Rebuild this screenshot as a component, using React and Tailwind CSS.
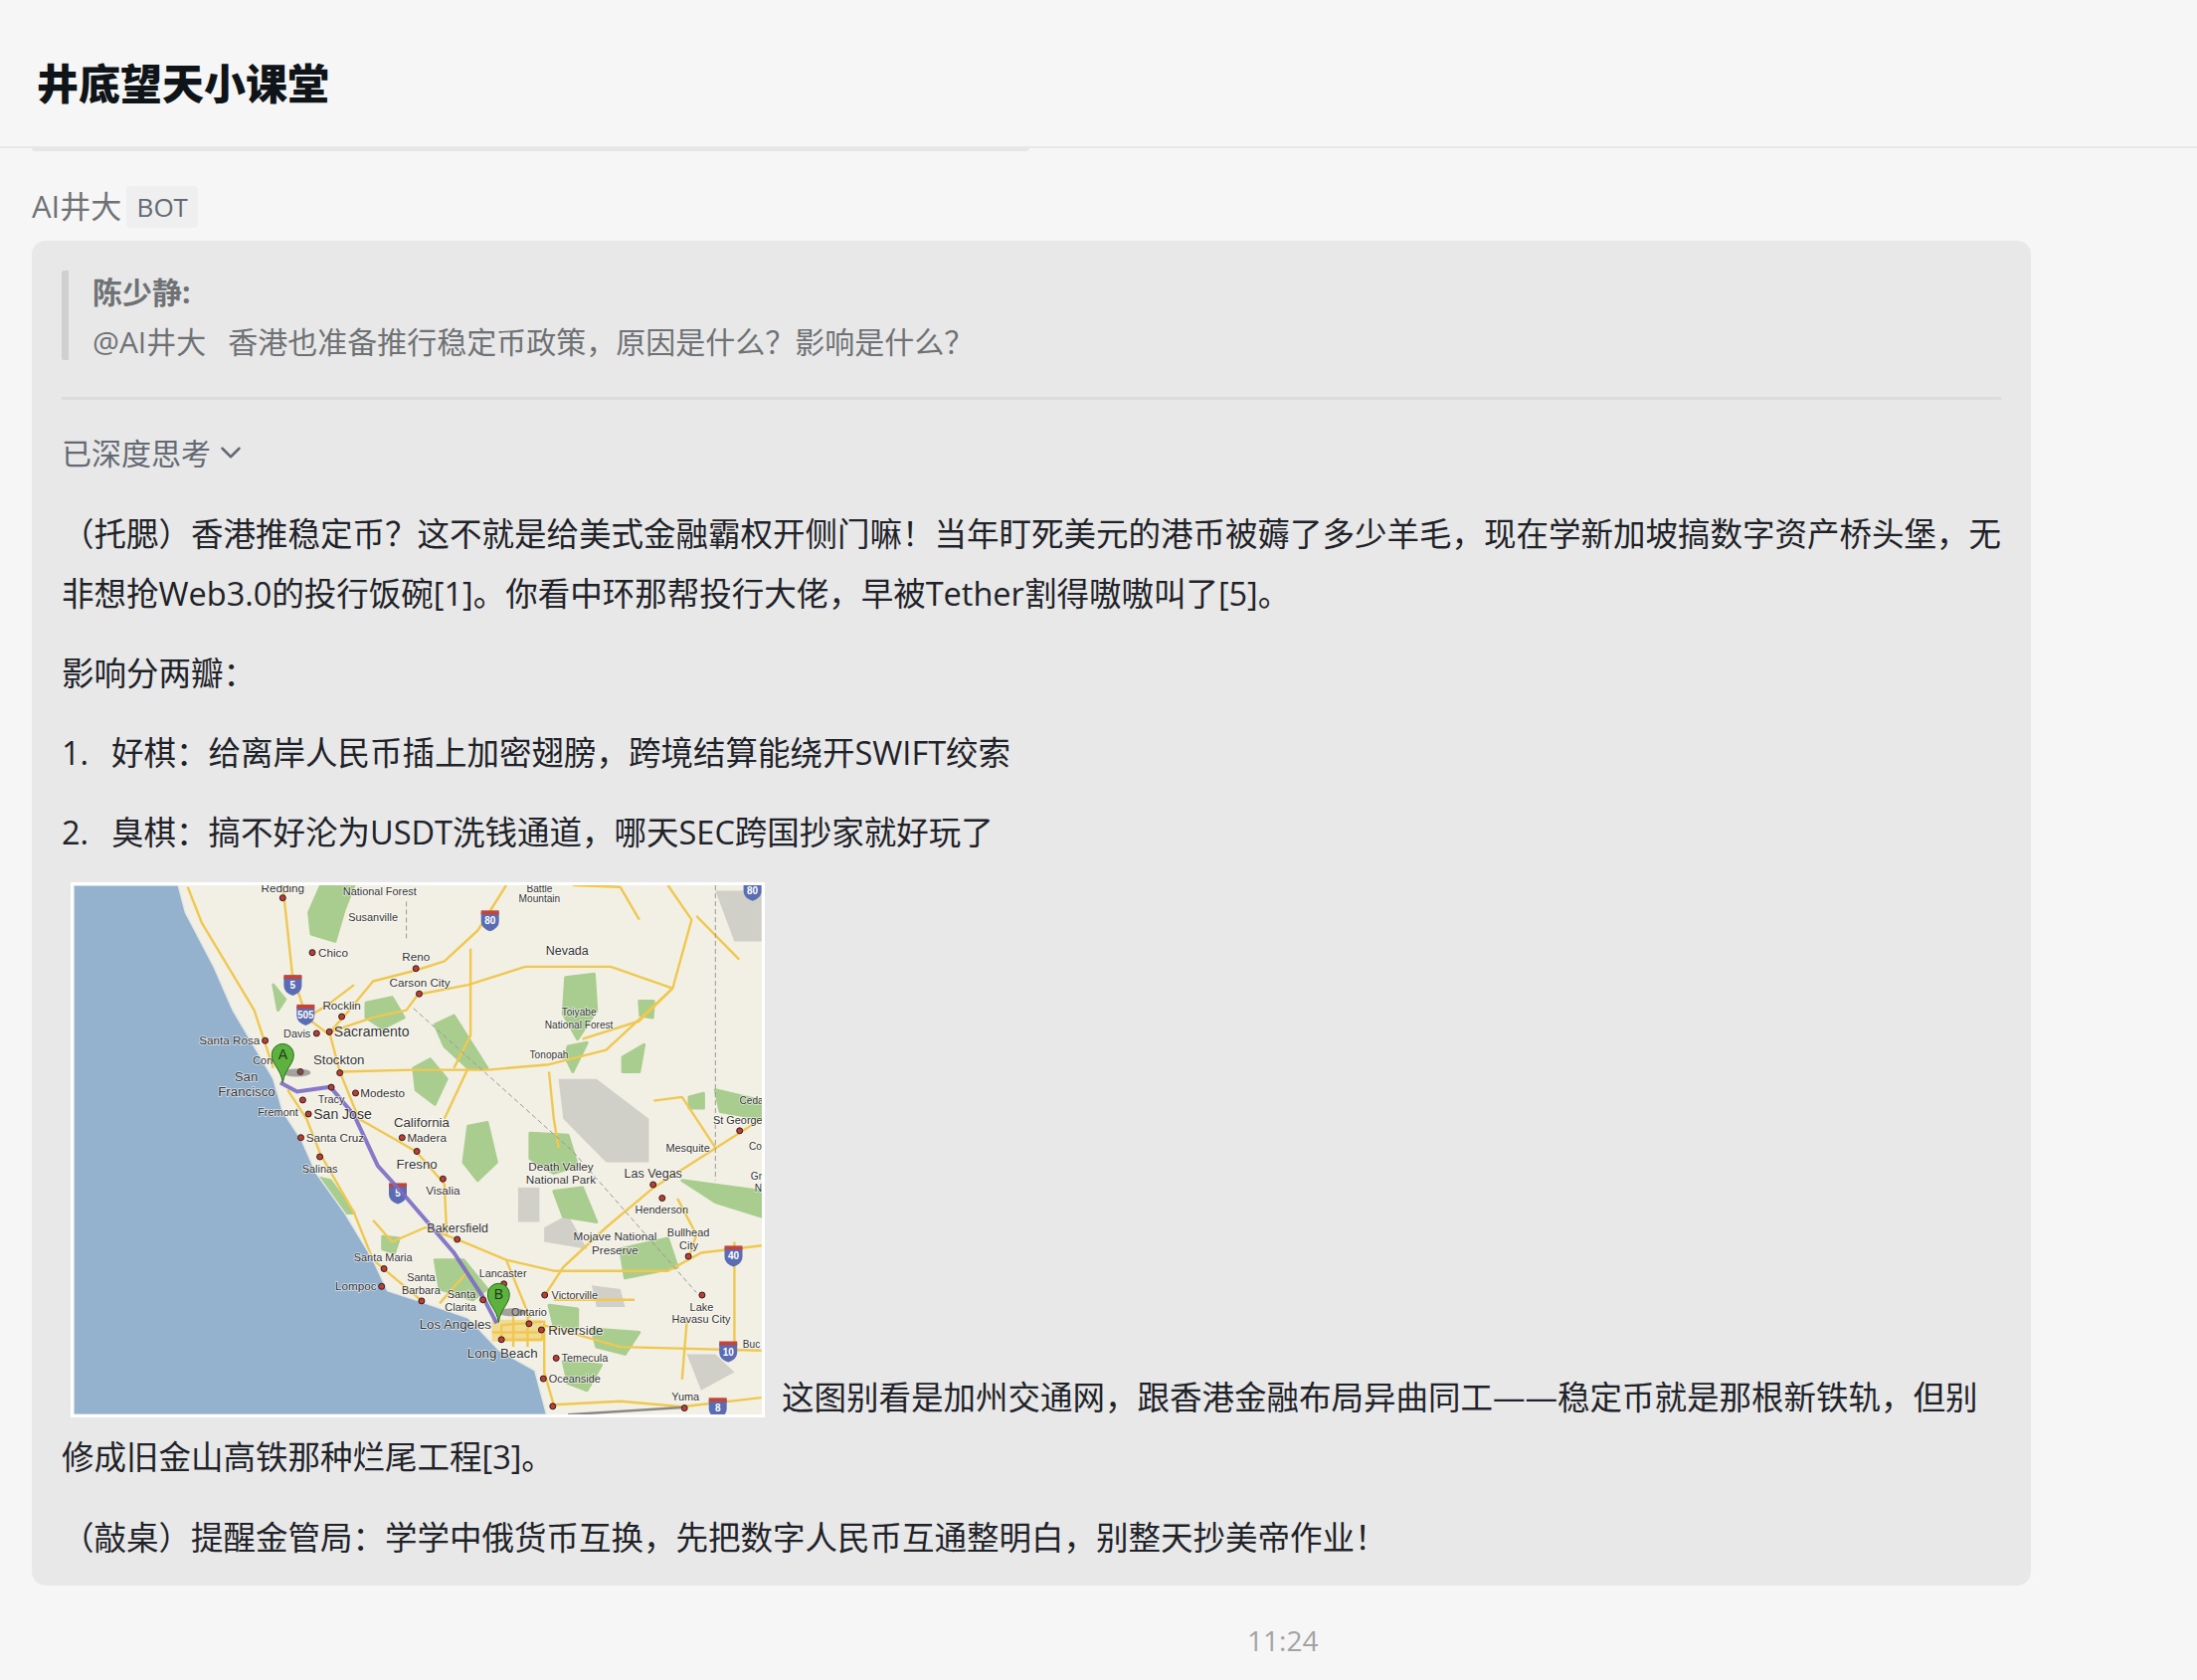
import React from "react";
import { ChevronDown } from "lucide-react";

const X = (x) => +((x - 50) * 0.478).toFixed(1);
const Y = (y) => +((y - 55) * 0.364).toFixed(1);
const pts = (a) => a.map(([x, y]) => `${X(x)},${Y(y)}`).join(" ");

const ocean = [[50,55],[270,55],[285,130],[345,280],[385,400],[430,500],[470,590],[490,680],[530,760],[560,850],[620,960],[680,1090],[710,1175],[780,1205],[880,1250],[945,1340],[1020,1395],[1045,1517],[50,1517]];
const greens = [
  [[570,55],[640,55],[620,120],[600,210],[550,190],[545,130]],
  [[665,380],[720,365],[745,420],[700,450],[665,420]],
  [[810,440],[850,415],[920,560],[880,560],[830,500]],
  [[765,560],[800,535],[835,590],[810,660],[770,620]],
  [[880,720],[920,710],[940,820],[900,870],[870,820]],
  [[1010,740],[1090,745],[1110,830],[1060,850],[1010,810]],
  [[1060,900],[1120,890],[1150,985],[1080,970]],
  [[1085,310],[1145,300],[1150,400],[1110,480],[1080,410]],
  [[1090,500],[1130,490],[1100,570],[1085,530]],
  [[1205,530],[1250,495],[1240,570],[1205,570]],
  [[1240,375],[1270,375],[1268,420],[1242,415]],
  [[1345,640],[1375,630],[1375,670],[1345,670]],
  [[1400,620],[1497,650],[1497,700],[1410,680]],
  [[1200,1060],[1300,1030],[1320,1110],[1210,1140]],
  [[1330,870],[1497,900],[1497,970],[1400,930]],
  [[810,1090],[870,1090],[920,1170],[890,1200],[820,1170]],
  [[1050,1215],[1110,1225],[1110,1280],[1060,1270]],
  [[1140,1280],[1240,1290],[1210,1350],[1150,1330]],
  [[555,860],[590,870],[640,960],[600,960]],
  [[1080,1370],[1160,1380],[1130,1450],[1090,1430]],
  [[700,1025],[735,1030],[725,1070],[700,1060]],
  [[470,330],[495,370],[480,400]],
];
const grays = [
  [[1070,590],[1150,590],[1260,700],[1260,820],[1170,820],[1080,700]],
  [[1400,70],[1497,70],[1497,210],[1440,210]],
  [[985,890],[1030,890],[1030,985],[985,985]],
  [[1040,1000],[1090,965],[1130,1060],[1040,1040]],
  [[1140,1160],[1200,1170],[1210,1220],[1150,1220]],
  [[1340,1350],[1400,1350],[1440,1400],[1370,1450]],
];
const roads = [
  [[490,55],[510,300],[540,420],[590,470],[610,570],[650,700],[770,790],[830,880],[835,1020]],
  [[770,290],[680,320],[630,400],[590,460]],
  [[960,55],[900,180],[830,265],[770,290]],
  [[590,460],[680,420],[750,400],[775,355]],
  [[610,570],[760,565],[920,565],[1050,550],[1170,510],[1310,340],[1350,150],[1300,55]],
  [[1310,340],[1180,280],[1000,280],[880,330],[780,355]],
  [[860,1035],[960,1090],[1010,1250]],
  [[960,1090],[1060,1120],[1300,1120],[1370,1070],[1497,1050]],
  [[1040,1190],[1080,1110],[1170,1000],[1270,890],[1450,740],[1497,700]],
  [[1040,1270],[1200,1330],[1497,1340]],
  [[1060,1490],[1200,1480],[1330,1495],[1497,1470]],
  [[1040,1270],[1040,1400],[1060,1490]],
  [[500,620],[540,700],[570,800],[640,960],[680,1090],[780,1200]],
  [[290,60],[320,160],[430,400],[470,560]],
  [[950,1270],[1040,1260],[1035,1310],[950,1310],[950,1270]],
  [[975,1240],[975,1330]],[[1005,1240],[1005,1330]],[[930,1290],[1040,1290]],
  [[1050,570],[1060,700],[1070,780]],
  [[830,700],[880,560]],
  [[885,230],[885,470],[850,560]],
  [[1120,480],[1240,430],[1310,340]],
  [[1270,650],[1330,640],[1400,780]],
  [[1100,55],[1200,60],[1240,150]],
  [[1320,920],[1360,1020],[1345,1080]],
  [[1340,1260],[1330,1420]],
  [[1230,1200],[1060,1200]],
  [[1440,1040],[1440,1350]],
  [[680,980],[720,1040],[790,1000],[860,1035]],
  [[640,330],[580,390],[540,420]],
  [[1450,260],[1360,140]],
  [[880,1120],[820,1210]],
];
const labels = [
  ["Redding",490,62,15],["National Forest",694,72,14],["Susanville",680,143,14],["Battle",1030,62,13],["Mountain",1030,90,13],
  ["Chico",596,241,15],["Reno",770,254,15],["Carson City",778,324,15],["Nevada",1088,235,16],["Rocklin",614,386,15],
  ["Toiyabe",1113,405,13],["National Forest",1113,440,13],["Sacramento",677,462,18],["Davis",520,465,14],["Santa Rosa",378,484,15],
  ["Tonopah",1050,522,13],["Con",448,538,14],["Stockton",608,538,17],["San",413,585,17],["Francisco",414,627,17],["Modesto",700,629,15],
  ["Tracy",592,645,14],["Fremont",480,680,14],["San Jose",616,689,18],["California",782,711,17],["Santa Cruz",600,752,15],["Madera",793,752,15],
  ["Salinas",568,837,14],["Fresno",772,828,17],["Death Valley",1075,832,15],["National Park",1075,869,15],["Visalia",827,897,15],
  ["Las Vegas",1269,851,16],["Mesquite",1342,780,14],["St George",1447,702,14],["Ceda",1476,648,13],["Co",1484,775,13],["Gr",1486,856,13],["N",1490,890,13],
  ["Henderson",1287,951,14],["Bakersfield",858,1002,16],["Mojave National",1189,1024,15],["Preserve",1189,1062,15],["Bullhead",1343,1014,14],["City",1344,1050,14],
  ["Santa Maria",701,1083,14],["Lancaster",953,1125,14],["Santa",781,1137,14],["Barbara",781,1172,14],["Lompoc",644,1163,15],["Santa",866,1185,14],["Clarita",864,1219,14],
  ["Victorville",1104,1187,14],["Lake",1371,1219,14],["Havasu City",1370,1254,14],["Ontario",1008,1234,14],["Los Angeles",853,1268,17],["Riverside",1106,1285,17],
  ["Buc",1476,1320,13],["Long Beach",952,1350,17],["Temecula",1125,1361,14],["Oceanside",1104,1418,14],["Yuma",1337,1468,14],
];
const dots = [[490,90],[552,241],[770,285],[777,355],[614,418],[561,464],[588,460],[453,484],[527,570],[610,573],[592,613],[643,629],[532,648],[544,687],[528,752],[741,752],[772,790],[568,805],[827,866],[1269,882],[1288,919],[1451,733],[857,1033],[1343,1080],[703,1114],[698,1163],[782,1203],[955,1156],[911,1200],[1041,1187],[1372,1187],[1008,1266],[1034,1283],[950,1310],[1065,1361],[1038,1418],[1058,1494],[1335,1499]];
const shields = [["5",511,330],["505",538,412],["80",926,152],["5",732,905],["40",1438,1078],["10",1427,1342],["8",1405,1498],["80",1478,68]];

function Pin({ x, y, l }) {
  const px = X(x), py = Y(y);
  return (
    <g>
      <ellipse cx={px + 14} cy={py - 10} rx="14" ry="4" fill="#555" opacity="0.5" />
      <path d={`M${px} ${py} C${px - 2} ${py - 14} ${px - 11} ${py - 18} ${px - 11} ${py - 28} A11 11 0 1 1 ${px + 11} ${py - 28} C${px + 11} ${py - 18} ${px + 2} ${py - 14} ${px} ${py}Z`} fill="#5db13e" stroke="#2c6d1a" strokeWidth="1" />
      <text x={px} y={py - 23} textAnchor="middle" fontSize="14" fill="#1d3d12">{l}</text>
    </g>
  );
}

function MapImage() {
  return (
    <svg viewBox="0 0 692 532" preserveAspectRatio="none" className="inline-block w-[698px] h-[538px] border-[3px] border-white ml-[9px] mr-[17px] align-[-8px]" style={{ fontFamily: '"Liberation Sans", sans-serif' }}>
      <defs>
        <filter id="soft" x="-5%" y="-5%" width="110%" height="110%">
          <feGaussianBlur stdDeviation="0.7" />
        </filter>
      </defs>
      <rect width="692" height="532" fill="#f2efe4" />
      <g filter="url(#soft)">
        {grays.map((g, i) => <polygon key={i} points={pts(g)} fill="#d0cfc8" />)}
        {greens.map((g, i) => <polygon key={i} points={pts(g)} fill="#a9cd8e" stroke="#a9cd8e" strokeWidth="3" strokeLinejoin="round" />)}
        {roads.map((r, i) => <polyline key={i} points={pts(r)} fill="none" stroke="#f0c850" strokeWidth="2.4" strokeLinejoin="round" />)}
        <polygon points={pts(ocean)} fill="#94b1cd" stroke="#e4e8e4" strokeWidth="1.5" />
        <rect x={X(930)} y={Y(1255)} width="50" height="22" fill="#f0c850" opacity="0.55" />
      </g>
      <polyline points={pts([[765,395],[1100,790],[1360,1180]])} fill="none" stroke="#999" strokeWidth="1" strokeDasharray="5 3" />
      <polyline points={pts([[750,100],[750,210]])} fill="none" stroke="#999" strokeWidth="1" strokeDasharray="5 3" />
      <polyline points={pts([[1400,55],[1400,870]])} fill="none" stroke="#999" strokeWidth="1" strokeDasharray="5 3" />
      <polyline points={pts([[1090,1517],[1330,1497]])} fill="none" stroke="#888" strokeWidth="2.5" />
      {shields.map(([t, x, y], i) => (
        <g key={i}>
          <path d={`M${X(x) - 9} ${Y(y) - 8} h18 v9 q0 7 -9 10 q-9 -3 -9 -10z`} fill="#5a6cb4" />
          <rect x={X(x) - 9} y={Y(y) - 10} width="18" height="4" fill="#c2453d" />
          <text x={X(x)} y={Y(y) + 4} textAnchor="middle" fontSize="10" fontWeight="700" fill="#fff">{t}</text>
        </g>
      ))}
      <polyline points={pts([[485,600],[520,625],[590,612],[640,690],[690,830],[745,910],[850,1070],[910,1190],[940,1265]])} fill="none" stroke="#7a6cc4" strokeWidth="4" opacity="0.9" />
      {dots.map(([x, y], i) => <circle key={i} cx={X(x)} cy={Y(y)} r="3" fill="#c23a32" stroke="#222" strokeWidth="1" />)}
      {labels.map(([t, x, y, s], i) => (
        <text key={i} x={X(x)} y={Y(y) + 4} textAnchor="middle" fontSize={s * 0.78} fill="#333" stroke="#fff" strokeWidth="1.5" paintOrder="stroke" strokeOpacity="0.7">{t}</text>
      ))}
      <Pin x={490} y={600} l="A" />
      <Pin x={944} y={1262} l="B" />
    </svg>
  );
}

const cjk = '"Open Sans", "Noto Sans CJK SC", "Noto Sans", sans-serif';

export default function App() {
  return (
    <div className="w-[2209px] h-[1689px] overflow-hidden bg-[#f6f6f6]" style={{ fontFamily: cjk }}>
      <header className="h-[149px] border-b-2 border-[#e8e8e8] pl-[37px] pt-[54px]">
        <h1 className="text-[42px] leading-[60px] font-black text-[#0f1419]">井底望天小课堂</h1>
      </header>
      <div className="w-[1003px] h-[3px] ml-[32px] bg-[#e6e6e6] rounded-b-[3px]" />
      <div className="pl-[32px] pt-[35px]">
        <div className="flex items-center h-[42px] text-[30px] text-[#6f7275]">
          <span className="pb-[1px] text-[31px]">AI井大</span>
          <span className="ml-[5px] w-[72px] h-[42px] flex items-center justify-center bg-[#efefef] rounded-[4px] text-[26px] text-[#646a73]">BOT</span>
        </div>
        <div className="w-[2010px] h-[1352px] mt-[13px] bg-[#e8e8e8] rounded-[14px] px-[30px] pt-[30px]">
          <div className="flow-root border-l-[7px] border-[#d0d0d0] rounded-[2px] pl-[24px] h-[90px] text-[30px] leading-[50px] text-[#6f7275]">
            <div className="font-bold -mt-[3px]">陈少静:</div>
            <div>@AI井大<span className="ml-[22px]">香港也准备推行稳定币政策，原因是什么？影响是什么？</span></div>
          </div>
          <div className="mt-[37px] h-[3px] bg-[#dcdcdc]" />
          <div className="mt-[31px] flex items-center h-[44px] text-[30px] text-[#646a73]">
            <span>已深度思考</span>
            <ChevronDown size={34} strokeWidth={1.8} className="ml-[3px]" />
          </div>
          <div className="mt-[30px] text-[32.5px] leading-[60px] text-[#1f2329]">
            <p>（托腮）香港推稳定币？这不就是给美式金融霸权开侧门嘛！当年盯死美元的港币被薅了多少羊毛，现在学新加坡搞数字资产桥头堡，无非想抢Web3.0的投行饭碗[1]。你看中环那帮投行大佬，早被Tether割得嗷嗷叫了[5]。</p>
            <p className="mt-[20px]">影响分两瓣：</p>
            <p className="mt-[20px] flex"><span className="w-[50px]">1.</span><span>好棋：给离岸人民币插上加密翅膀，跨境结算能绕开SWIFT绞索</span></p>
            <p className="mt-[20px] flex"><span className="w-[50px]">2.</span><span>臭棋：搞不好沦为USDT洗钱通道，哪天SEC跨国抄家就好玩了</span></p>
            <p className="mt-[20px]"><MapImage />这图别看是加州交通网，跟香港金融布局异曲同工——稳定币就是那根新铁轨，但别修成旧金山高铁那种烂尾工程[3]。</p>
            <p className="mt-[21px]">（敲桌）提醒金管局：学学中俄货币互换，先把数字人民币互通整明白，别整天抄美帝作业！</p>
          </div>
        </div>
        <div className="mt-[35px] ml-[1222px] text-[28px] leading-[40px] text-[#a3a3a3]">11:24</div>
      </div>
    </div>
  );
}
